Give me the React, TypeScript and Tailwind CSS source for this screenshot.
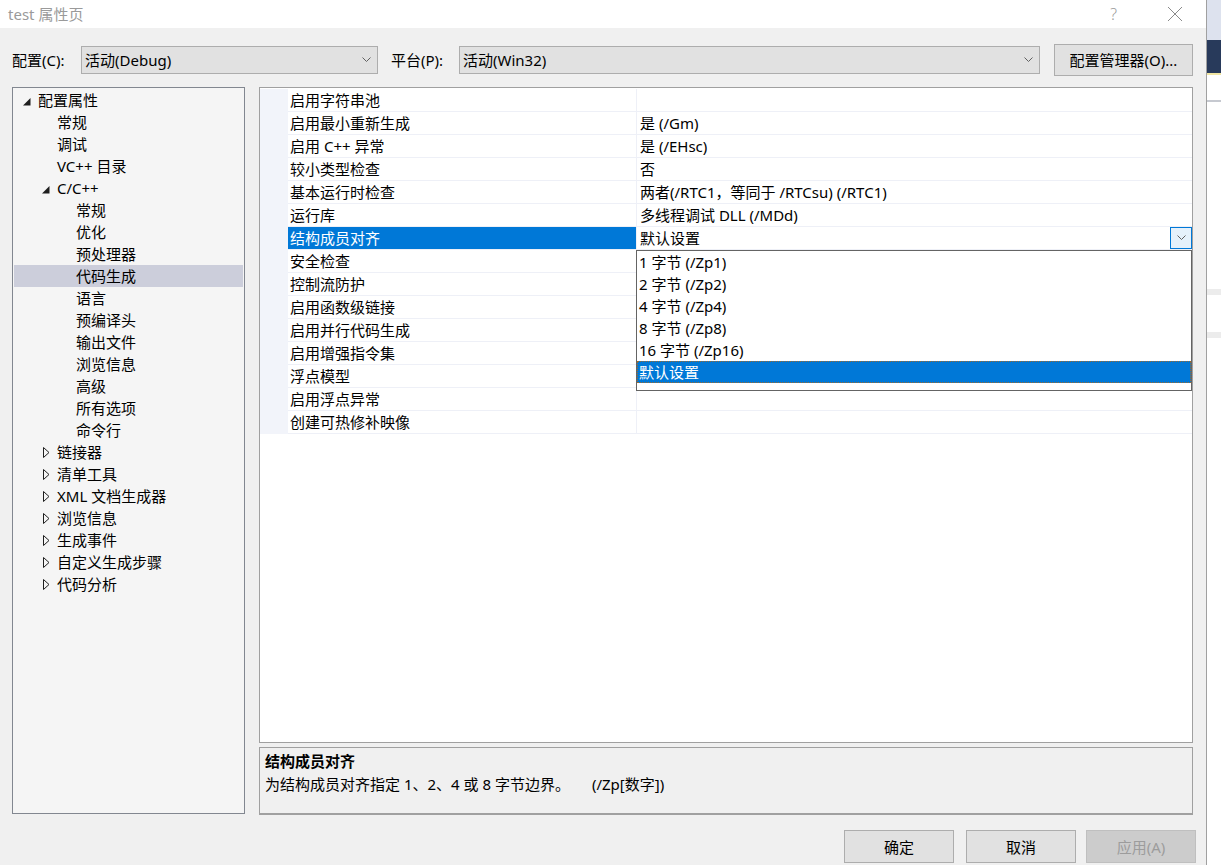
import React from 'react';

type TreeItem = { label: string; level: number; arrow?: 'open' | 'closed'; selected?: boolean };

const treeItems: TreeItem[] = [
  { label: '配置属性', level: 0, arrow: 'open' },
  { label: '常规', level: 1 },
  { label: '调试', level: 1 },
  { label: 'VC++ 目录', level: 1 },
  { label: 'C/C++', level: 1, arrow: 'open' },
  { label: '常规', level: 2 },
  { label: '优化', level: 2 },
  { label: '预处理器', level: 2 },
  { label: '代码生成', level: 2, selected: true },
  { label: '语言', level: 2 },
  { label: '预编译头', level: 2 },
  { label: '输出文件', level: 2 },
  { label: '浏览信息', level: 2 },
  { label: '高级', level: 2 },
  { label: '所有选项', level: 2 },
  { label: '命令行', level: 2 },
  { label: '链接器', level: 1, arrow: 'closed' },
  { label: '清单工具', level: 1, arrow: 'closed' },
  { label: 'XML 文档生成器', level: 1, arrow: 'closed' },
  { label: '浏览信息', level: 1, arrow: 'closed' },
  { label: '生成事件', level: 1, arrow: 'closed' },
  { label: '自定义生成步骤', level: 1, arrow: 'closed' },
  { label: '代码分析', level: 1, arrow: 'closed' },
];

const properties: [string, string][] = [
  ['启用字符串池', ''],
  ['启用最小重新生成', '是 (/Gm)'],
  ['启用 C++ 异常', '是 (/EHsc)'],
  ['较小类型检查', '否'],
  ['基本运行时检查', '两者(/RTC1，等同于 /RTCsu) (/RTC1)'],
  ['运行库', '多线程调试 DLL (/MDd)'],
  ['结构成员对齐', '默认设置'],
  ['安全检查', ''],
  ['控制流防护', ''],
  ['启用函数级链接', ''],
  ['启用并行代码生成', ''],
  ['启用增强指令集', ''],
  ['浮点模型', ''],
  ['启用浮点异常', ''],
  ['创建可热修补映像', ''],
];

const options = ['1 字节 (/Zp1)', '2 字节 (/Zp2)', '4 字节 (/Zp4)', '8 字节 (/Zp8)', '16 字节 (/Zp16)', '默认设置'];

const Chevron = () => (
  <svg width="9" height="6" viewBox="0 0 9 6" className="shrink-0">
    <polyline points="0.5,0.5 4.5,4.5 8.5,0.5" fill="none" stroke="#606060" strokeWidth="1" />
  </svg>
);

const Arrow = ({ kind }: { kind: 'open' | 'closed' }) =>
  kind === 'open' ? (
    <svg width="8" height="8" viewBox="0 0 8 8" className="ml-px mt-[3px]">
      <polygon points="7.5,0 7.5,7.5 0,7.5" fill="#1e1e1e" />
    </svg>
  ) : (
    <svg width="8" height="11" viewBox="0 0 8 11" className="ml-[2px]">
      <polygon points="0.5,0.5 6,5.5 0.5,10.5" fill="none" stroke="#1e1e1e" strokeWidth="1" />
    </svg>
  );

const Combo = ({ text, width }: { text: string; width: string }) => (
  <div className={`flex h-[28px] ${width} items-center justify-between border border-[#adadad] bg-[#e1e1e1] pl-[3px] pr-[6px]`}>
    <span>{text}</span>
    <Chevron />
  </div>
);

export default function App() {
  return (
    <div className="flex h-[865px] w-[1221px] overflow-hidden font-['Noto_Sans','Noto_Sans_CJK_SC',sans-serif] text-[15px] leading-[22px] text-black">
      {/* dialog */}
      <div className="flex w-[1207px] shrink-0 flex-col border-r border-[#a0a0a0] bg-[#f0f0f0]">
        {/* title bar */}
        <div className="flex h-[28px] items-center bg-white pl-[8px] text-[#9a9a9a]">
          <span className="flex-1">test 属性页</span>
          <span className="mr-[50px] text-[16px] font-light">?</span>
          <svg width="16" height="16" viewBox="0 0 16 16" className="mr-[23px]">
            <path d="M1 1 L15 15 M15 1 L1 15" stroke="#8a8a8a" strokeWidth="1" />
          </svg>
        </div>

        {/* configuration row */}
        <div className="mt-[16px] flex h-[32px] items-center pl-[12px]">
          <span className="w-[69px]">配置(C):</span>
          <Combo text="活动(Debug)" width="w-[297px]" />
          <span className="ml-[13px] w-[68px]">平台(P):</span>
          <Combo text="活动(Win32)" width="w-[581px]" />
          <div className="ml-[14px] flex h-[32px] w-[139px] items-center justify-center border border-[#adadad] bg-[#e1e1e1]">
            配置管理器(O)...
          </div>
        </div>

        {/* main area */}
        <div className="mt-[11px] flex pl-[12px]">
          {/* tree */}
          <div className="h-[727px] w-[233px] border border-[#828790] bg-[#f5f5f5] p-px">
            {treeItems.map((item, i) => (
              <div
                key={i}
                className={`flex h-[22px] items-center ${item.selected ? 'bg-[#cccedb]' : ''} ${
                  item.level === 0 ? 'pl-[8px]' : item.level === 1 ? 'pl-[27px]' : 'pl-[46px]'
                }`}
              >
                <div className="flex w-[16px] items-center">{item.arrow && <Arrow kind={item.arrow} />}</div>
                <span>{item.label}</span>
              </div>
            ))}
          </div>

          {/* right column */}
          <div className="ml-[14px] flex w-[934px] flex-col">
            {/* property grid */}
            <div className="relative h-[656px] border border-[#a0a0a0] bg-white pt-px">
              {properties.map(([name, value], i) => {
                const sel = i === 6;
                return (
                  <div key={i} className="flex h-[23px]">
                    <div className="w-[28px] bg-[#f2f4fa]" />
                    <div
                      className={`flex w-[349px] items-center border-b border-r border-[#eef0f7] pl-[2px] ${
                        sel ? 'bg-[#0078d7] text-white' : ''
                      }`}
                    >
                      {name}
                    </div>
                    <div className="flex flex-1 items-center border-b border-[#eef0f7] pl-[3px]">
                      <span className="flex-1">{value}</span>
                      {sel && (
                        <div className="flex h-[22px] w-[22px] items-center justify-center border border-[#0078d7] bg-[#e5f1fb]">
                          <Chevron />
                        </div>
                      )}
                    </div>
                  </div>
                );
              })}

              {/* open dropdown */}
              <div className="absolute left-[376px] top-[162px] h-[141px] w-[556px] border border-[#646464] bg-white">
                {options.map((opt, i) => (
                  <div
                    key={i}
                    className={`flex h-[22px] items-center pl-[2px] ${
                      i === 5 ? 'border border-dotted border-[#9a6a30] bg-[#0078d7] pl-px text-white' : ''
                    }`}
                  >
                    {opt}
                  </div>
                ))}
              </div>
            </div>

            {/* description */}
            <div className="mt-[4px] h-[68px] border border-b-2 border-[#a0a0a0] bg-[#f0f0f0] pl-[5px] pt-[2px]">
              <div className="font-bold">结构成员对齐</div>
              <div className="mt-px">
                为结构成员对齐指定 1、2、4 或 8 字节边界。
                <span className="ml-[22px]">(/Zp[数字])</span>
              </div>
            </div>
          </div>
        </div>

        {/* buttons */}
        <div className="mt-[15px] flex justify-end pr-[10px]">
          <div className="flex h-[33px] w-[110px] items-center justify-center border border-[#adadad] bg-[#e1e1e1]">确定</div>
          <div className="ml-[12px] flex h-[33px] w-[110px] items-center justify-center border border-[#adadad] bg-[#e1e1e1]">取消</div>
          <div className="ml-[10px] flex h-[33px] w-[110px] items-center justify-center border border-[#bfbfbf] bg-[#cccccc] text-[#9c9c9c]">
            应用(A)
          </div>
        </div>
      </div>

      {/* window behind */}
      <div className="flex flex-1 flex-col bg-white">
        <div className="h-[40px] bg-[#dde2ee]" />
        <div className="h-[33px] bg-[#283a5b]" />
        <div className="h-[2px] bg-[#f1e6a3]" />
        <div className="h-[25px] bg-white" />
        <div className="h-[2px] bg-[#c6c9d0]" />
        <div className="h-[187px]" />
        <div className="h-[6px] bg-[#ececec]" />
        <div className="h-[37px]" />
        <div className="h-[6px] bg-[#ececec]" />
      </div>
    </div>
  );
}
